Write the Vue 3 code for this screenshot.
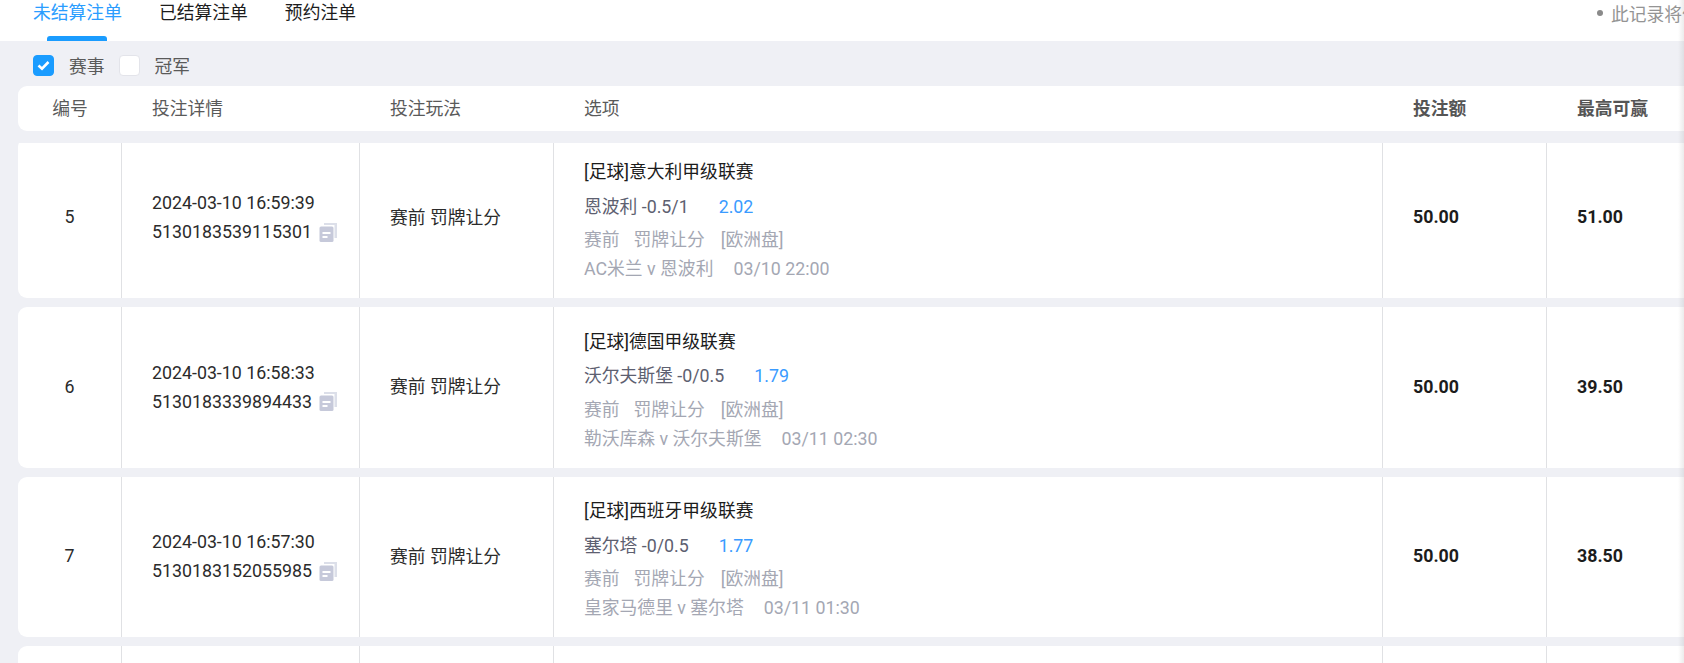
<template>
  <div class="page">
    <div class="tabbar">
      <div class="tabs">
        <div v-for="(t, i) in tabs" :key="t" class="tab" :class="{ active: i === 0 }">
          <span class="tab-text">{{ t }}</span>
          <span class="tab-bar"></span>
        </div>
      </div>
      <div class="notice"><i class="notice-dot"></i>此记录将保留</div>
    </div>

    <div class="content">
      <div class="filters">
        <span class="check on">
          <svg width="13" height="11" viewBox="0 0 13 11"><path d="M1.5 5.5l3.5 3.2L11.5 2" fill="none" stroke="#fff" stroke-width="2.6" /></svg>
        </span>
        <span class="check-label">赛事</span>
        <span class="check"></span>
        <span class="check-label">冠军</span>
      </div>

      <div class="head grid">
        <div class="hcell center">编号</div>
        <div class="hcell">投注详情</div>
        <div class="hcell">投注玩法</div>
        <div class="hcell">选项</div>
        <div class="hcell strong">投注额</div>
        <div class="hcell strong">最高可赢</div>
      </div>

      <div class="list">
        <div v-for="r in rows" :key="r.no" class="row grid">
          <div class="cell center nudge">{{ r.no }}</div>
          <div class="cell detail">
            <div>{{ r.time }}</div>
            <div class="order">
              {{ r.order }}
              <svg class="copy" width="19" height="20" viewBox="0 0 19 20">
                <path d="M5 3V1h13v15h-2.5V3z" fill="#dcdfe9" />
                <rect x="0.5" y="4.5" width="14" height="15.5" rx="1.5" fill="#c6c9da" />
                <path d="M3.5 10h8v2h-8zM3.5 14h5v2h-5z" fill="#fff" />
              </svg>
            </div>
          </div>
          <div class="cell play">赛前 罚牌让分</div>
          <div class="cell pick">
            <div class="league">{{ r.league }}</div>
            <div class="sel">{{ r.sel }}<span class="odds">{{ r.odds }}</span></div>
            <div class="muted sub"><span>赛前</span><span>罚牌让分</span><span>[欧洲盘]</span></div>
            <div class="muted"><span class="match">{{ r.match }}</span>{{ r.date }}</div>
          </div>
          <div class="cell amount nudge">{{ r.stake }}</div>
          <div class="cell amount nudge last">{{ r.win }}</div>
        </div>
        <div class="row grid">
          <div class="cell"></div>
          <div class="cell"></div>
          <div class="cell"></div>
          <div class="cell"></div>
          <div class="cell"></div>
          <div class="cell last"></div>
        </div>
      </div>
    </div>
    <div class="edge"></div>
  </div>
</template>

<script setup>
const tabs = ['未结算注单', '已结算注单', '预约注单']

const rows = [
  {
    no: 5, time: '2024-03-10 16:59:39', order: '5130183539115301',
    league: '[足球]意大利甲级联赛', sel: '恩波利 -0.5/1', odds: '2.02',
    match: 'AC米兰 v 恩波利', date: '03/10 22:00', stake: '50.00', win: '51.00',
  },
  {
    no: 6, time: '2024-03-10 16:58:33', order: '5130183339894433',
    league: '[足球]德国甲级联赛', sel: '沃尔夫斯堡 -0/0.5', odds: '1.79',
    match: '勒沃库森 v 沃尔夫斯堡', date: '03/11 02:30', stake: '50.00', win: '39.50',
  },
  {
    no: 7, time: '2024-03-10 16:57:30', order: '5130183152055985',
    league: '[足球]西班牙甲级联赛', sel: '塞尔塔 -0/0.5', odds: '1.77',
    match: '皇家马德里 v 塞尔塔', date: '03/11 01:30', stake: '50.00', win: '38.50',
  },
]
</script>

<style>
html, body { margin: 0; overflow: hidden; }
</style>

<style scoped>
.page {
  position: relative;
  width: 100%;
  height: 663px;
  overflow: hidden;
  background: #eff0f5;
  font-family: Roboto, "Noto Sans CJK SC", sans-serif;
  font-size: 17.8px;
  color: #2b2b2b;
}

.tabbar {
  display: grid;
  grid-template-columns: 1597px 1fr;
  height: 41px;
  background: #fff;
}
.tabs { display: flex; gap: 37px; padding-left: 33px; }
.tab { display: flex; flex-direction: column; align-items: center; height: 41px; }
.tab-text { line-height: 26px; color: #1c1c1c; white-space: nowrap; }
.tab.active .tab-text { color: #2a9dff; }
.tab-bar { margin-top: auto; width: 60px; height: 5px; border-radius: 3px 3px 0 0; }
.tab.active .tab-bar { background: #1a9cff; }

.notice {
  display: flex; align-items: center;
  height: 26px;
  white-space: nowrap;
  color: #949494;
}
.notice-dot {
  width: 6px; height: 6px; border-radius: 50%;
  background: #8a8a8a;
  margin-right: 8px;
}

.content { width: 1800px; padding-left: 18px; }

.filters { display: flex; align-items: center; height: 21px; padding: 14px 0 10px 15px; }
.check {
  display: flex; align-items: center; justify-content: center;
  box-sizing: border-box;
  width: 21px; height: 21px;
  border: 1px solid #e3e4ea;
  border-radius: 4px;
  background: #fff;
}
.check.on { background: #1a9cff; border-color: #1a9cff; }
.check-label { margin: 0 14px 0 15px; padding-top: 2px; color: #5a5a5a; line-height: 21px; }

.grid {
  display: grid;
  grid-template-columns: 104px 238px 194px 829px 164px 1fr;
  background: #fff;
  border-radius: 9px;
}

.head { height: 45px; margin-bottom: 12px; align-items: center; }
.hcell { padding: 0 0 4px 30px; color: #5a5a5a; }
.hcell.center { padding-left: 0; text-align: center; }
.hcell.strong { font-weight: 700; color: #555; }

.list { display: flex; flex-direction: column; gap: 9px; height: 520px; overflow: hidden; }
.row { flex: none; height: 160.5px; }
.row:first-child { margin-top: -5.5px; }

.cell {
  display: flex; flex-direction: column; justify-content: center;
  box-sizing: border-box;
  padding-left: 30px;
  border-right: 1px solid #e0e1e4;
  color: #2b2b2b;
}
.cell.center { padding-left: 0; align-items: center; }
.cell.last { border-right: none; }
.nudge { padding-bottom: 2px; }
.play { padding-bottom: 4px; }

.detail { padding-bottom: 1px; line-height: 29px; }
.order { display: flex; align-items: center; }
.copy { margin-left: 7px; }

.pick { padding-top: 4.5px; line-height: 29px; }
.league { margin-bottom: 5.5px; color: #1c1c1c; }
.sel { margin-bottom: 4.5px; color: #5d6070; }
.odds { margin-left: 30px; color: #3a9bff; }
.muted { color: #a4a7b3; }
.sub span { margin-right: 14px; }
.sub span:nth-child(2) { margin-right: 16px; }
.match { margin-right: 20px; }

.amount { font-weight: 700; color: #1c1c1c; }

.edge {
  position: absolute;
  top: 0; right: 0; bottom: 0;
  width: 6px;
  background: linear-gradient(to right, rgba(120, 120, 120, 0), rgba(120, 120, 120, 0.14));
}
</style>
